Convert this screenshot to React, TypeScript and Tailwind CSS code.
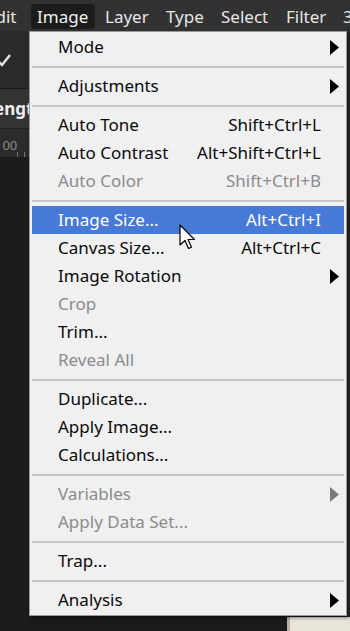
import React from "react";

type Item =
  | { sep: true }
  | { sep?: false; label: string; shortcut?: string; sub?: boolean; disabled?: boolean; active?: boolean };

const items: Item[] = [
  { label: "Mode", sub: true },
  { sep: true },
  { label: "Adjustments", sub: true },
  { sep: true },
  { label: "Auto Tone", shortcut: "Shift+Ctrl+L" },
  { label: "Auto Contrast", shortcut: "Alt+Shift+Ctrl+L" },
  { label: "Auto Color", shortcut: "Shift+Ctrl+B", disabled: true },
  { sep: true },
  { label: "Image Size...", shortcut: "Alt+Ctrl+I", active: true },
  { label: "Canvas Size...", shortcut: "Alt+Ctrl+C" },
  { label: "Image Rotation", sub: true },
  { label: "Crop", disabled: true },
  { label: "Trim..." },
  { label: "Reveal All", disabled: true },
  { sep: true },
  { label: "Duplicate..." },
  { label: "Apply Image..." },
  { label: "Calculations..." },
  { sep: true },
  { label: "Variables", sub: true, disabled: true },
  { label: "Apply Data Set...", disabled: true },
  { sep: true },
  { label: "Trap..." },
  { sep: true },
  { label: "Analysis", sub: true },
];

function Arrow({ color }: { color: string }) {
  return (
    <svg width="9" height="15" viewBox="0 0 9 15" className="absolute left-[298px] top-[7px]">
      <polygon points="0,0 9,7.5 0,15" fill={color} />
    </svg>
  );
}

export default function App() {
  return (
    <div
      className="relative w-[350px] h-[631px] overflow-hidden bg-[#1b1b1b]"
      style={{ fontFamily: '"Noto Sans", "Open Sans", sans-serif' }}
    >
      {/* menu bar */}
      <div className="h-[31px] bg-[#323232] flex items-center pt-[2px] text-[17px] text-[#e6e6e6] whitespace-nowrap overflow-hidden">
        <span className="shrink-0 ml-[-14px] w-[34px]">Edit</span>
        <span className="shrink-0 ml-[11px] w-[64px] rounded-[4px] bg-[#1c1c1c] pl-[6px] h-[25px] flex items-center text-[#f0f0f0]">Image</span>
        <span className="shrink-0 ml-[10px] w-[41px]">Layer</span>
        <span className="shrink-0 ml-[20px] w-[36px]">Type</span>
        <span className="shrink-0 ml-[19px] w-[46px]">Select</span>
        <span className="shrink-0 ml-[19px] w-[39px]">Filter</span>
        <span className="shrink-0 ml-[18px]">3D</span>
      </div>
      {/* toolbar */}
      <div className="h-[58px] bg-[#2a2a2a] border-b border-[#1c1c1c] relative">
        <svg width="14" height="14" viewBox="0 0 14 14" className="absolute left-[-3px] top-[22px]">
          <path d="M1 8 L5 12 L13 2" stroke="#e0e0e0" strokeWidth="2.5" fill="none" />
        </svg>
      </div>
      {/* doc tab */}
      <div className="h-[40px] bg-[#333333] border-b border-[#1f1f1f] flex items-center">
        <span className="ml-[-6px] text-[17px] font-bold text-[#eeeeee]">ength</span>
      </div>
      {/* ruler */}
      <div className="h-[28px] bg-[#2b2b2b] relative text-[13px] text-[#8a8a8a]">
        <span className="absolute left-[-5px] top-[7px]">100</span>
        <div className="absolute left-[17px] bottom-0 w-px h-[5px] bg-[#777]" />
        <div className="absolute left-[24px] bottom-0 w-px h-[5px] bg-[#777]" />
      </div>
      <div className="absolute left-[346px] top-[31px] w-[4px] h-[600px] bg-[#2b2b2b]" />
      <div className="absolute left-[287px] top-[617px] w-[63px] h-[14px] bg-[#e9e4da] border-l-[3px] border-[#b9b2a3]" />

      {/* menu */}
      <div className="absolute left-[29px] top-[31px] w-[318px] bg-[#f0f0f0] border border-[#9a9a9a] shadow-[2px_2px_3px_rgba(0,0,0,0.45)] pt-[1px] pb-[1px]">
        {items.map((it, i) =>
          it.sep ? (
            <div key={i} className="h-[11px] flex items-center px-[2px]">
              <div className="h-[2px] w-full bg-[#c6c6c6]" />
            </div>
          ) : (
            <div
              key={i}
              className={`relative h-[28px] mx-[2px] flex items-center text-[17px] ${
                it.active ? "bg-[#477ad6] text-white" : it.disabled ? "text-[#8b8b8b]" : "text-[#0a0a0a]"
              }`}
            >
              <span className="ml-[26px]">{it.label}</span>
              {it.shortcut && (
                <span className="absolute right-[23px]">{it.shortcut}</span>
              )}
              {it.sub && <Arrow color={it.disabled ? "#7a7a7a" : "#000"} />}
            </div>
          )
        )}
      </div>
      {/* cursor */}
      <svg width="20" height="28" viewBox="0 0 20 28" className="absolute left-[179px] top-[224px]">
        <path d="M1 1 L1 21 L6 16.5 L9.5 24.5 L12.5 23.2 L9 15.5 L15.5 15.5 Z" fill="#ffffff" stroke="#000" strokeWidth="1.2" strokeLinejoin="round" />
      </svg>
    </div>
  );
}
